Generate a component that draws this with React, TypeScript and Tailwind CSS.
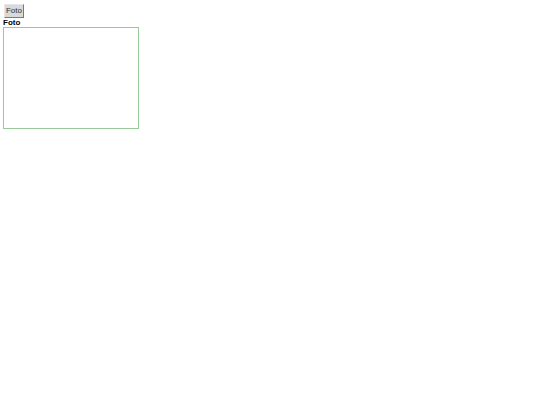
export default function App() {
  return (
    <div className="min-h-[405px] bg-white p-[3px] font-['Liberation_Sans',Arial,sans-serif] text-black">
      <div className="flex flex-col items-start">
        <button
          type="button"
          className="ml-px mt-px h-[14px] w-[20px] border border-t-[#e6e6e6] border-l-[#e6e6e6] border-b-[#7a7a7a] border-r-[#7a7a7a] bg-[#d9d9d9] text-[8px] leading-none text-[#333]"
        >
          Foto
        </button>
        <div className="pt-px text-[8px] font-bold leading-[8px]">Foto</div>
        <div className="h-[102px] w-[136px] border border-[#99c999] bg-white" />
      </div>
    </div>
  );
}
